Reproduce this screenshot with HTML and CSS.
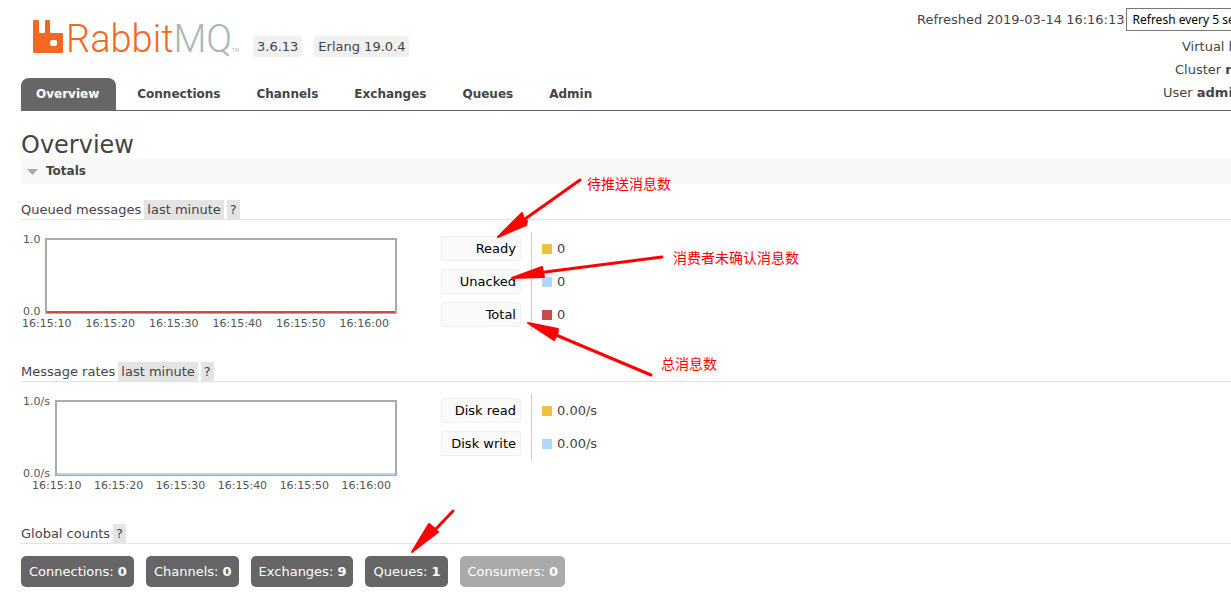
FILE: index.html
```html
<!DOCTYPE html>
<html lang="en">
<head>
<meta charset="utf-8">
<title>RabbitMQ Management</title>
<link rel="stylesheet" href="styles.css">
</head>
<body>
<header class="header">
  <div class="brand">
    <a class="logo" href="#">
      <svg class="logo-mark" viewBox="0 0 30 33" aria-hidden="true"><path fill="#f26822" fill-rule="evenodd" d="M1 0H5Q6 0 6 1V12Q6 13 7 13H11Q12 13 12 12V1Q12 0 13 0H16Q17 0 17 1V12Q17 13 18 13H29Q30 13 30 14V32Q30 33 29 33H1Q0 33 0 32V1Q0 0 1 0ZM19 20Q17 20 17 22V24Q17 26 19 26H22Q24 26 24 24V22Q24 20 22 20Z"/></svg>
      <span class="logo-text">Rabbit<span class="logo-mq">MQ</span></span><span class="logo-tm">TM</span>
    </a>
    <span class="version">3.6.13</span>
    <span class="version">Erlang 19.0.4</span>
  </div>
  <div class="status">
    <div class="status-row refresh"><label for="refresh">Refreshed 2019-03-14 16:16:13</label>
      <select id="refresh" class="refresh-select"><option>Refresh every 5 seconds</option></select></div>
    <div class="status-row vhost">Virtual host</div>
    <div class="status-row cluster">Cluster <b>rabbit</b></div>
    <div class="status-row user">User <b>admin</b></div>
  </div>
</header>
<nav class="tabs">
  <a class="tab selected" href="#">Overview</a>
  <a class="tab" href="#">Connections</a>
  <a class="tab" href="#">Channels</a>
  <a class="tab" href="#">Exchanges</a>
  <a class="tab" href="#">Queues</a>
  <a class="tab" href="#">Admin</a>
</nav>
<main class="main">
  <h1 class="title">Overview</h1>
  <h2 class="section-title"><button class="toggle" type="button"><svg class="caret" viewBox="0 0 11 6" aria-hidden="true"><path fill="#aaa9a4" d="M0 0H11L5.5 6Z"/></svg>Totals</button></h2>

  <h3 class="subhead">Queued messages <button class="chip" type="button">last minute</button> <button class="chip" type="button">?</button></h3>
  <div class="stats">
    <div class="chart">
      <div class="y-axis"><span>1.0</span><span>0.0</span></div>
      <div class="plot plot-total"></div>
      <div class="x-axis"><span>16:15:10</span><span>16:15:20</span><span>16:15:30</span><span>16:15:40</span><span>16:15:50</span><span>16:16:00</span></div>
    </div>
    <table class="legend">
      <tr><th><button class="series" type="button">Ready</button></th><td><i class="swatch yellow"></i>0</td></tr>
      <tr><th><button class="series" type="button">Unacked</button></th><td><i class="swatch blue"></i>0</td></tr>
      <tr><th><button class="series" type="button">Total</button></th><td><i class="swatch red"></i>0</td></tr>
    </table>
  </div>

  <h3 class="subhead">Message rates <button class="chip" type="button">last minute</button> <button class="chip" type="button">?</button></h3>
  <div class="stats">
    <div class="chart chart-rates">
      <div class="y-axis"><span>1.0/s</span><span>0.0/s</span></div>
      <div class="plot plot-disk"></div>
      <div class="x-axis"><span>16:15:10</span><span>16:15:20</span><span>16:15:30</span><span>16:15:40</span><span>16:15:50</span><span>16:16:00</span></div>
    </div>
    <table class="legend">
      <tr><th><button class="series" type="button">Disk read</button></th><td><i class="swatch yellow"></i>0.00/s</td></tr>
      <tr><th><button class="series" type="button">Disk write</button></th><td><i class="swatch blue"></i>0.00/s</td></tr>
    </table>
  </div>

  <h3 class="subhead">Global counts <button class="chip" type="button">?</button></h3>
  <div class="counts">
    <a class="count" href="#">Connections: <b>0</b></a>
    <a class="count" href="#">Channels: <b>0</b></a>
    <a class="count" href="#">Exchanges: <b>9</b></a>
    <a class="count" href="#">Queues: <b>1</b></a>
    <a class="count disabled">Consumers: <b>0</b></a>
  </div>
</main>

<svg class="arrows" width="800" height="600" viewBox="0 0 800 600" aria-hidden="true">
  <g stroke="#f00" stroke-width="3" stroke-linecap="round" stroke-linejoin="round" fill="#f00">
    <path d="M580 180L525 219"/>
    <path stroke-width="2" d="M498 237L522 213L524 219L527 221L526 225Z"/>
    <path d="M662 257L545 272"/>
    <path stroke-width="2" d="M512 278L542 267L543 272L544 277Z"/>
    <path d="M651 375L556 335"/>
    <path stroke-width="2" d="M528 323L558 329L557 335L554 340Z"/>
    <path d="M453 511L434 531"/>
    <path stroke-width="2" d="M412 552L429 524L434 528L438 532Z"/>
  </g>
</svg>
<span class="note note-ready" lang="zh">待推送消息数</span>
<span class="note note-unacked" lang="zh">消费者未确认消息数</span>
<span class="note note-total" lang="zh">总消息数</span>
</body>
</html>
```
FILE: styles.css
```css
* { box-sizing: border-box; }

body {
  position: relative;
  margin: 0;
  padding-left: 21px;
  overflow: hidden;
  background: #fff;
  color: #444;
  font: 13px/20px "DejaVu Sans", Verdana, sans-serif;
}

button { font: inherit; color: inherit; border: 0; margin: 0; }
a { color: inherit; text-decoration: none; }

.header { display: flex; justify-content: space-between; height: 78px; }
.brand { display: flex; align-items: flex-start; padding: 20px 0 0 12px; }
.logo { display: flex; align-items: flex-start; width: 208px; height: 33px; }
.logo-mark { flex: none; width: 30px; height: 33px; margin-right: 3px; }
.logo-text {
  color: #f26822;
  font: 300 38px/38px Roboto, sans-serif;
}
.logo-mq { color: #a9b8b2; }
.logo-tm { align-self: flex-end; color: #a9b8b2; font: 5px/6px "Liberation Sans", sans-serif; }
.version {
  margin: 16px 0 0 12px;
  padding: 0 4px;
  border-radius: 4px;
  background: #f0f0f0;
  line-height: 21px;
}

.status { display: flex; flex-direction: column; align-items: flex-end; padding-top: 8px; }
.status-row { height: 23px; line-height: 23px; white-space: nowrap; }
.refresh { display: flex; align-items: center; gap: 1px; width: 314px; height: 24px; margin-bottom: 4px; }
.refresh-select {
  flex: none;
  width: 180px;
  height: 23px;
  padding: 0 2px;
  border: 1px solid #767676;
  background: #fff;
  color: #000;
  font: 12px "Noto Sans", sans-serif;
}
.vhost { width: 49px; }
.cluster { width: 56px; }
.user { width: 68px; }

.tabs { display: flex; gap: 6px; border-bottom: 1px solid #666; }
.tab {
  padding: 1px 15px 0;
  border-radius: 8px 8px 0 0;
  font-size: 12px;
  font-weight: bold;
  line-height: 31px;
}
.selected { padding-right: 17px; background: #666; color: #fff; }

.main { padding-top: 20px; }
.title { margin: 0; padding-top: 1px; font-size: 24px; font-weight: normal; line-height: 27px; }
.section-title { margin: 0 0 16px; background: #f8f8f8; font-size: 12px; line-height: 25px; }
.toggle { display: flex; align-items: center; gap: 8px; padding: 0 6px; background: none; }
.caret { width: 11px; height: 6px; }

.subhead {
  display: flex;
  gap: 3px;
  margin: 0;
  border-bottom: 1px solid #e4e4e4;
  font-size: 13px;
  font-weight: normal;
  line-height: 19px;
}
.chip { padding: 0 3px; background: #e4e4e4; }

.stats { display: flex; align-items: flex-start; gap: 44px; height: 142px; padding-top: 12px; }
.chart {
  display: grid;
  grid-template-columns: 24px 352px;
  grid-template-rows: 76px 18px;
  padding-top: 6px;
  font-size: 11px;
  color: #545454;
}
.chart-rates { grid-template-columns: 34px 342px; }
.y-axis {
  display: flex;
  flex-direction: column;
  justify-content: space-between;
  padding-left: 2px;
  line-height: 4px;
}
.plot { border: 2px solid #aaa; }
.plot::after { content: ""; display: block; height: 2px; margin-top: 71px; background: #cb4b4b; }
.plot-disk::after { background: #afd8f8; }
.x-axis {
  grid-column: 1 / 3;
  display: flex;
  justify-content: space-between;
  padding: 0 8px 0 1px;
  line-height: 19px;
}
.chart-rates .x-axis { padding: 0 6px 0 11px; }

.legend { border-collapse: collapse; }
.legend th { padding: 4px 10px 4px 0; border-right: 1px solid #ccc; font-weight: normal; }
.legend td { height: 33px; padding: 0 0 0 10px; }
.series {
  display: block;
  width: 80px;
  height: 25px;
  padding: 0 4px;
  border: 1px solid #f0f0f0;
  border-radius: 3px;
  background: #fafafa;
  color: #000;
  text-align: right;
}
.swatch { display: inline-block; width: 10px; height: 10px; margin-right: 5px; vertical-align: -1px; }
.yellow { background: #edc240; }
.blue { background: #afd8f8; }
.red { background: #cb4b4b; }

.counts { display: flex; gap: 12px; padding: 12px 0 15px; }
.count { padding: 0 7px 0 8px; border-radius: 5px; background: #666; color: #fff; line-height: 31px; }
.disabled { background: #aaa; }

.arrows { position: absolute; left: 0; top: 0; pointer-events: none; }
.note {
  position: absolute;
  color: #f00;
  font: 14px/20px "Noto Sans CJK SC", sans-serif;
  white-space: nowrap;
}
.note-ready { left: 587px; top: 173px; }
.note-unacked { left: 673px; top: 247px; }
.note-total { left: 661px; top: 353px; }
```
